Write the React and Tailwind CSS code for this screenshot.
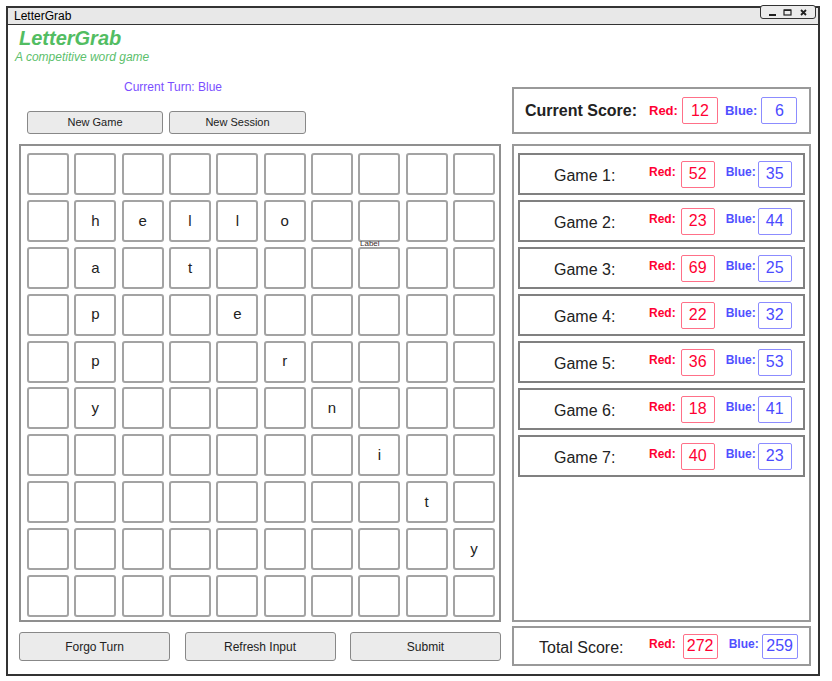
const board = [
  ['', '', '', '', '', '', '', '', '', ''],
  ['', 'h', 'e', 'l', 'l', 'o', '', '', '', ''],
  ['', 'a', '', 't', '', '', '', '', '', ''],
  ['', 'p', '', '', 'e', '', '', '', '', ''],
  ['', 'p', '', '', '', 'r', '', '', '', ''],
  ['', 'y', '', '', '', '', 'n', '', '', ''],
  ['', '', '', '', '', '', '', 'i', '', ''],
  ['', '', '', '', '', '', '', '', 't', ''],
  ['', '', '', '', '', '', '', '', '', 'y'],
  ['', '', '', '', '', '', '', '', '', ''],
];

const games = [
  { red: 52, blue: 35 },
  { red: 23, blue: 44 },
  { red: 69, blue: 25 },
  { red: 22, blue: 32 },
  { red: 36, blue: 53 },
  { red: 18, blue: 41 },
  { red: 40, blue: 23 },
];

function WindowControls() {
  return (
    <div className="-mt-[3px] mr-[2px] flex h-[14px] w-[56px] items-center justify-around rounded-[3px] border border-[#333] bg-[#ececec] px-[4px]">
      <svg width="9" height="9" viewBox="0 0 9 9">
        <rect x="1" y="6" width="7" height="2" fill="#222" />
      </svg>
      <svg width="9" height="9" viewBox="0 0 9 9">
        <rect x="1" y="2" width="7" height="5" fill="none" stroke="#222" strokeWidth="1.2" />
        <rect x="1" y="1.5" width="7" height="1.5" fill="#222" />
      </svg>
      <svg width="9" height="9" viewBox="0 0 9 9">
        <path d="M2 2 L7 7 M7 2 L2 7" stroke="#222" strokeWidth="1.8" />
      </svg>
    </div>
  );
}

function ScoreBox({ value, color, w = 'w-[34px]', h = 'h-[27px]' }) {
  const cls =
    color === 'red'
      ? 'border-[#ff7088] text-[#ff0033]'
      : 'border-[#8c8cff] text-[#4b4bff]';
  return (
    <div
      className={`flex ${w} ${h} items-center justify-center rounded-[2px] border bg-white text-[16px] ${cls}`}
    >
      {value}
    </div>
  );
}

export default function App() {
  return (
    <div
      className="h-[681px] w-[832px] bg-white pl-[6px] pt-[6px] text-[#222]"
      style={{ fontFamily: '"Liberation Sans", Arial, sans-serif' }}
    >
      <div className="flex h-[670px] w-[814px] flex-col border-2 border-[#333]">
        {/* title bar */}
        <div className="flex h-[17px] items-start justify-between border-b border-[#333] bg-[#e8e8e8] pl-[6px]">
          <span className="text-[12px] leading-[16px] text-black">LetterGrab</span>
          <WindowControls />
        </div>

        <div className="flex gap-[11px] pl-[11px]">
          {/* left column */}
          <div className="flex w-[482px] flex-col">
            <div className="mt-[1px] text-[20px] font-bold italic leading-[24px] text-[#52bd62]">
              LetterGrab
            </div>
            <div className="-ml-[4px] text-[12px] italic leading-[14px] text-[#5cc06c]">
              A competitive word game
            </div>
            <div className="ml-[105px] mt-[16px] text-[12px] leading-[14px] text-[#7b4fff]">
              Current Turn: Blue
            </div>
            <div className="ml-[8px] mt-[17px] flex gap-[6px]">
              <button className="h-[23px] w-[136px] rounded-[3px] border border-[#888] bg-[#ebebeb] text-[11px] text-[#222]">
                New Game
              </button>
              <button className="h-[23px] w-[137px] rounded-[3px] border border-[#888] bg-[#ebebeb] text-[11px] text-[#222]">
                New Session
              </button>
            </div>

            {/* board */}
            <div className="relative mt-[10px] h-[478px] border-2 border-[#8f8f8f] bg-white pb-[3px] pl-[6px] pr-[4px] pt-[7px]">
              <div className="grid h-full grid-cols-[repeat(10,42px)] grid-rows-[repeat(10,42px)] content-between justify-between">
                {board.flat().map((ch, i) => (
                  <div
                    key={i}
                    className="flex items-center justify-center rounded-[3px] border-2 border-[#a3a3a3] text-[15px] text-[#222]"
                  >
                    {ch}
                  </div>
                ))}
              </div>
              <span className="absolute left-[339px] top-[94px] text-[8px] leading-[8px] text-[#3a2a2a]">
                Label
              </span>
            </div>

            {/* bottom buttons */}
            <div className="mt-[10px] flex justify-between">
              {['Forgo Turn', 'Refresh Input', 'Submit'].map((t) => (
                <button
                  key={t}
                  className="h-[29px] w-[151px] rounded-[3px] border border-[#888] bg-[#ebebeb] text-[12px] text-[#222]"
                >
                  {t}
                </button>
              ))}
            </div>
          </div>

          {/* right column */}
          <div className="flex w-[299px] flex-col">
            <div className="mt-[62px] flex h-[47px] items-center border-2 border-[#999] pl-[11px]">
              <span className="w-[124px] text-[16px] font-bold text-[#222]">Current Score:</span>
              <span className="text-[13px] font-bold text-[#ff0033]">Red:</span>
              <div className="ml-[4px]">
                <ScoreBox value={12} color="red" w="w-[36px]" />
              </div>
              <span className="ml-[7px] text-[13px] font-bold text-[#5050ff]">Blue:</span>
              <div className="ml-[4px]">
                <ScoreBox value={6} color="blue" w="w-[36px]" />
              </div>
            </div>

            <div className="mt-[10px] flex h-[478px] flex-col gap-[5px] border-2 border-[#999] px-[4px] pt-[7px]">
              {games.map((g, i) => (
                <div
                  key={i}
                  className="flex h-[42px] shrink-0 items-center border-2 border-[#808080] pl-[34px]"
                >
                  <span className="mt-[3px] w-[95px] text-[16px] text-[#222]">Game {i + 1}:</span>
                  <span className="mb-[4px] text-[12px] font-bold text-[#ff0033]">Red:</span>
                  <div className="ml-[5px]">
                    <ScoreBox value={g.red} color="red" />
                  </div>
                  <span className="mb-[4px] ml-[11px] text-[12px] font-bold text-[#5050ff]">Blue:</span>
                  <div className="ml-[2px]">
                    <ScoreBox value={g.blue} color="blue" />
                  </div>
                </div>
              ))}
            </div>

            <div className="mt-[4px] flex h-[40px] items-center border-2 border-[#999] pl-[25px]">
              <span className="mt-[4px] w-[110px] text-[16px] text-[#222]">Total Score:</span>
              <span className="mb-[4px] text-[12px] font-bold text-[#ff0033]">Red:</span>
              <div className="ml-[7px]">
                <ScoreBox value={272} color="red" w="w-[35px]" h="h-[25px]" />
              </div>
              <span className="mb-[4px] ml-[11px] text-[12px] font-bold text-[#5050ff]">Blue:</span>
              <div className="ml-[3px]">
                <ScoreBox value={259} color="blue" w="w-[36px]" h="h-[25px]" />
              </div>
            </div>
          </div>
        </div>
      </div>
    </div>
  );
}
